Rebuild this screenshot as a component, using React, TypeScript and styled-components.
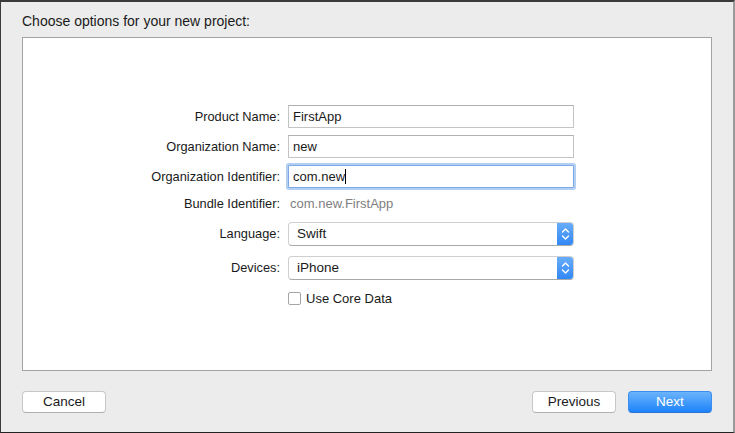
import React from "react";
import styled, { createGlobalStyle, css } from "styled-components";

const Global = createGlobalStyle`
  html, body { margin: 0; padding: 0; background: #ececec; }
  body { font-family: "Liberation Sans", Arial, sans-serif; -webkit-font-smoothing: antialiased; }
`;

const Window = styled.div`
  width: 735px;
  height: 433px;
  box-sizing: border-box;
  background: #ececec;
  border-top: 2px solid #3a3a3a;
  border-left: 1px solid #3a3a3a;
  border-bottom: 1px solid #222;
  border-right: 2px solid #9a9a9a;
  display: flex;
  flex-direction: column;
  padding: 0 21px 0 21px;
  color: #1a1a1a;
`;

const Heading = styled.div`
  font-size: 14px;
  line-height: 16px;
  height: 16px;
  margin-top: 11px;
  margin-bottom: 8px;
`;

const Panel = styled.div`
  height: 334px;
  box-sizing: border-box;
  background: #fff;
  border: 1px solid #a3a3a3;
  padding: 67px 0 0 0;
`;

const Form = styled.div`
  display: grid;
  grid-template-columns: 257px 286px;
  grid-template-rows: 30px 30px 30px 27px 34px 33px 20px;
  column-gap: 8px;
  align-items: start;
`;

const Label = styled.div`
  font-size: 12.8px;
  height: 23px;
  line-height: 23px;
  text-align: right;
  white-space: nowrap;
  color: #1a1a1a;
`;

const Field = styled.div<{ $focused?: boolean }>`
  height: 23px;
  box-sizing: border-box;
  border: 1px solid #c4c4c4;
  border-top-color: #b0b0b0;
  background: #fff;
  font-size: 13px;
  line-height: 21px;
  padding: 0 4px;
  display: flex;
  align-items: center;
  ${(p) =>
    p.$focused &&
    css`
      border-color: #7ea9e6;
      box-shadow: 0 0 0 2px #b3cff4;
      border-radius: 1px;
    `}
`;

const Caret = styled.span`
  display: inline-block;
  width: 1px;
  height: 15px;
  background: #000;
`;

const Static = styled.div`
  font-size: 13px;
  height: 18px;
  line-height: 18px;
  color: #808080;
  padding-left: 2px;
`;

const StaticLabel = styled(Label)`
  height: 18px;
  line-height: 18px;
`;

const Popup = styled.div`
  height: 24px;
  box-sizing: border-box;
  border: 1px solid #cfcfcf;
  border-bottom-color: #a9a9a9;
  border-radius: 4px;
  background: #fff;
  display: flex;
  overflow: hidden;
  font-size: 13.5px;
`;

const PopupText = styled.div`
  flex: 1;
  line-height: 22px;
  padding-left: 8px;
`;

const Stepper = styled.div`
  width: 17px;
  background: linear-gradient(#6aaef9, #2f86f5);
  display: flex;
  align-items: center;
  justify-content: center;
  margin: -1px -1px -1px 0;
  border-radius: 0 4px 4px 0;
`;

const CheckRow = styled.label`
  display: flex;
  align-items: center;
  gap: 5px;
  font-size: 13px;
  height: 16px;
  margin-top: 1px;
`;

const Box = styled.span`
  width: 13px;
  height: 13px;
  box-sizing: border-box;
  border: 1px solid #a5a5a5;
  border-radius: 2px;
  background: #fff;
`;

const Footer = styled.div`
  display: flex;
  align-items: center;
  margin-top: 20px;
`;

const Spacer = styled.div`
  flex: 1;
`;

const Button = styled.div<{ $primary?: boolean }>`
  width: 84px;
  height: 22px;
  box-sizing: border-box;
  border-radius: 4px;
  font-size: 13.5px;
  line-height: 20px;
  text-align: center;
  border: 1px solid #c8c8c8;
  border-bottom-color: #b0b0b0;
  background: #fff;
  color: #1a1a1a;
  & + & {
    margin-left: 12px;
  }
  ${(p) =>
    p.$primary &&
    css`
      background: linear-gradient(#6cb4fb, #1d83fb);
      border-color: #3b8ef0;
      border-bottom-color: #2a74d6;
      color: #fff;
    `}
`;

const Chevrons = () => (
  <svg width="9" height="14" viewBox="0 0 9 14" fill="none">
    <path d="M1.5 5 L4.5 2 L7.5 5" stroke="#fff" strokeWidth="1.4" strokeLinecap="round" strokeLinejoin="round" />
    <path d="M1.5 9 L4.5 12 L7.5 9" stroke="#fff" strokeWidth="1.4" strokeLinecap="round" strokeLinejoin="round" />
  </svg>
);

export default function App() {
  return (
    <>
      <Global />
      <Window>
        <Heading>Choose options for your new project:</Heading>
        <Panel>
          <Form>
            <Label>Product Name:</Label>
            <Field>FirstApp</Field>

            <Label>Organization Name:</Label>
            <Field>new</Field>

            <Label>Organization Identifier:</Label>
            <Field $focused>
              com.new
              <Caret />
            </Field>

            <StaticLabel>Bundle Identifier:</StaticLabel>
            <Static>com.new.FirstApp</Static>

            <Label>Language:</Label>
            <Popup>
              <PopupText>Swift</PopupText>
              <Stepper>
                <Chevrons />
              </Stepper>
            </Popup>

            <Label>Devices:</Label>
            <Popup>
              <PopupText>iPhone</PopupText>
              <Stepper>
                <Chevrons />
              </Stepper>
            </Popup>

            <div />
            <CheckRow>
              <Box />
              Use Core Data
            </CheckRow>
          </Form>
        </Panel>
        <Footer>
          <Button>Cancel</Button>
          <Spacer />
          <Button>Previous</Button>
          <Button $primary>Next</Button>
        </Footer>
      </Window>
    </>
  );
}
